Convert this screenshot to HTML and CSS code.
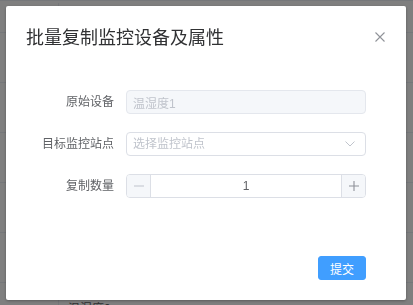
FILE: index.html
```html
<!DOCTYPE html>
<html lang="zh-CN">
<head>
    <meta charset="UTF-8">
    <meta name="viewport" content="width=device-width, initial-scale=1.0">
    <title>批量复制监控设备及属性</title>
    <link rel="stylesheet" href="styles.css">
</head>
<body>

    <!-- page underneath the dialog -->
    <div class="page">
        <div class="table-head">
            <span class="col-index"></span>
            <span class="col-name"></span>
        </div>
        <div class="table-row"><span class="col-index"></span><span class="col-name"></span></div>
        <div class="table-row"><span class="col-index"></span><span class="col-name"></span></div>
        <div class="table-row"><span class="col-index"></span><span class="col-name"></span></div>
        <div class="table-row"><span class="col-index"></span><span class="col-name"></span></div>
        <div class="table-row"><span class="col-index"></span><span class="col-name"></span></div>
        <div class="table-row"><span class="col-index"></span><span class="col-name">温湿度0</span></div>
    </div>

    <div class="mask"></div>

    <!-- dialog -->
    <div class="dialog">
        <div class="dialog-header">
            <span class="dialog-title">批量复制监控设备及属性</span>
            <button class="dialog-close" type="button">
                <svg width="10" height="10" viewBox="0 0 10 10">
                    <path d="M0.5 0.5 L9.5 9.5 M9.5 0.5 L0.5 9.5" stroke="#909399" stroke-width="1.1" fill="none"/>
                </svg>
            </button>
        </div>

        <div class="dialog-body">
            <div class="form-item">
                <label class="form-label">原始设备</label>
                <div class="input is-disabled">
                    <input type="text" value="温湿度1" disabled>
                </div>
            </div>

            <div class="form-item">
                <label class="form-label">目标监控站点</label>
                <div class="input select">
                    <input type="text" placeholder="选择监控站点" readonly>
                    <svg class="select-arrow" width="10" height="6" viewBox="0 0 10 6">
                        <path d="M0.5 0.5 L5 5 L9.5 0.5" stroke="#c0c4cc" stroke-width="1" fill="none"/>
                    </svg>
                </div>
            </div>

            <div class="form-item">
                <label class="form-label">复制数量</label>
                <div class="input-number">
                    <span class="number-btn minus is-disabled">
                        <svg width="10" height="10" viewBox="0 0 10 10">
                            <path d="M0 5 H10" stroke="#c0c4cc" stroke-width="1.2"/>
                        </svg>
                    </span>
                    <input type="text" value="1">
                    <span class="number-btn plus">
                        <svg width="10" height="10" viewBox="0 0 10 10">
                            <path d="M0 5 H10 M5 0 V10" stroke="#8e9198" stroke-width="1.1"/>
                        </svg>
                    </span>
                </div>
            </div>
        </div>

        <div class="dialog-footer">
            <button class="btn-primary" type="button">提交</button>
        </div>
    </div>

</body>
</html>
```

FILE: styles.css
```css
body {
    margin: 0;
    height: 305px;
    background-color: #fff;
    font-family: 'Liberation Sans', 'Noto Sans CJK SC', sans-serif;
    font-size: 12px;
    color: #606266;
    overflow: hidden;
}

/* underlying table */
.page {
    height: 305px;
    overflow: hidden;
    padding-top: 2px;
    box-sizing: border-box;
    border-top: 1px solid #ebeef5;
}

.table-head,
.table-row {
    display: flex;
    border-bottom: 1px solid #ebeef5;
}

.table-head {
    height: 29px;
}

.table-row {
    height: 49px;
    align-items: center;
}

.col-index {
    width: 58px;
    height: 100%;
    border-right: 1px solid #ebeef5;
}

.col-name {
    padding-left: 9px;
    color: #606266;
}

.mask {
    position: fixed;
    inset: 0;
    background-color: rgba(0, 0, 0, 0.5);
}

/* dialog */
.dialog {
    position: fixed;
    top: 6px;
    left: 6px;
    width: 400px;
    background-color: #fff;
    border-radius: 2px;
    box-shadow: 0 1px 3px rgba(0, 0, 0, 0.3);
}

.dialog-header {
    display: flex;
    justify-content: space-between;
    align-items: center;
    padding: 20px 21px 10px 20px;
}

.dialog-title {
    font-size: 18px;
    line-height: 24px;
    color: #303133;
}

.dialog-close {
    display: flex;
    padding: 0;
    border: none;
    background: none;
    margin-top: -2px;
}

.dialog-body {
    padding: 30px 20px;
}

.form-item {
    display: flex;
    align-items: center;
    margin-bottom: 18px;
}

.form-label {
    width: 100px;
    box-sizing: border-box;
    padding-right: 12px;
    text-align: right;
    color: #606266;
    line-height: 24px;
}

.input {
    position: relative;
    width: 240px;
}

.input input {
    display: block;
    width: 100%;
    height: 24px;
    box-sizing: border-box;
    padding: 0 6px;
    border: 1px solid #dcdfe6;
    border-radius: 4px;
    font-family: inherit;
    font-size: 12px;
    color: #606266;
    background-color: #fff;
    outline: none;
}

.input input::placeholder {
    color: #c0c4cc;
}

.input.is-disabled input {
    background-color: #f5f7fa;
    border-color: #e4e7ed;
    color: #c0c4cc;
}

.select-arrow {
    position: absolute;
    right: 11px;
    top: 9px;
}

.input-number {
    display: flex;
    width: 240px;
    height: 24px;
    box-sizing: border-box;
    border: 1px solid #dcdfe6;
    border-radius: 4px;
    overflow: hidden;
}

.input-number input {
    flex: 1;
    min-width: 0;
    border: none;
    padding: 0;
    text-align: center;
    font-family: inherit;
    font-size: 12px;
    color: #606266;
    outline: none;
}

.number-btn {
    width: 23px;
    display: flex;
    align-items: center;
    justify-content: center;
    background-color: #f5f7fa;
}

.number-btn.minus {
    border-right: 1px solid #dcdfe6;
}

.number-btn.plus {
    border-left: 1px solid #dcdfe6;
}

.dialog-footer {
    display: flex;
    justify-content: flex-end;
    padding: 10px 40px 20px 20px;
}

.btn-primary {
    width: 48px;
    height: 24px;
    padding: 0;
    border: 1px solid #409eff;
    border-radius: 3px;
    background-color: #409eff;
    color: #fff;
    font-family: inherit;
    font-size: 12px;
}
```
